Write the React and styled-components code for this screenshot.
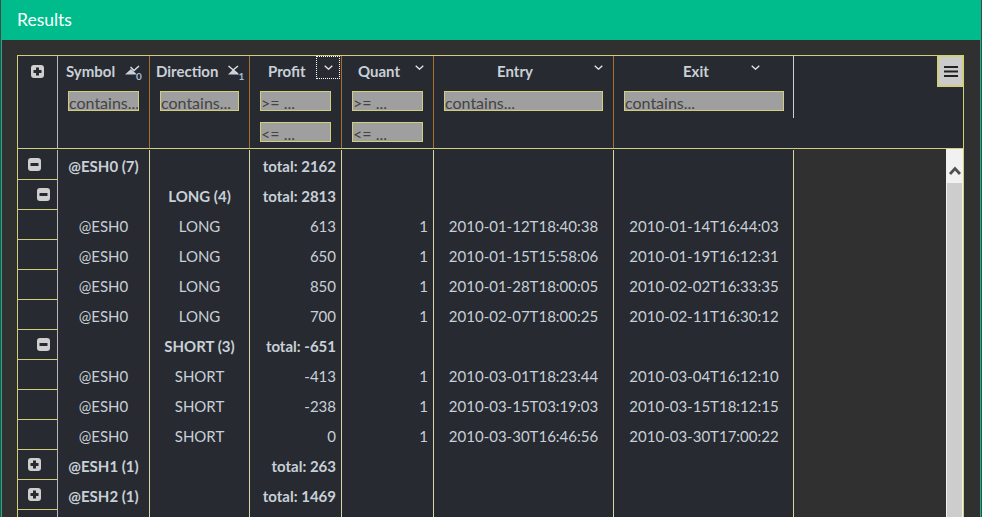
import React from 'react';
import styled, { createGlobalStyle } from 'styled-components';

const GlobalStyle = createGlobalStyle`
  html, body { margin: 0; padding: 0; height: 100%; overflow: hidden; background: #303030; }
  * { box-sizing: border-box; }
  body { font-family: Lato, "Open Sans", sans-serif; }
`;

const YELLOW = '#d2cf7c';
const BODY_LINE = '#d5d5a8';
const ORANGE = '#a8702c';
const CELL_BG = '#272a30';

const Panel = styled.div`
  width: 982px;
  height: 517px;
  overflow: hidden;
  background: #303030;
  border-left: 1px solid #484848;
  border-right: 1px solid #484848;
  box-shadow: inset 1px 0 0 #00bc8c, inset -1px 0 0 #00bc8c;
  padding: 0 1px;
  display: flex;
  flex-direction: column;
`;

const TitleBar = styled.div`
  height: 40px;
  flex: none;
  background: #00bc8c;
  color: #fff;
  font-size: 17.5px;
  line-height: 40px;
  padding-left: 15px;
`;

const PanelBody = styled.div`
  flex: 1;
  min-height: 0;
  padding: 15px 15px 0;
`;

const Grid = styled.div`
  position: relative;
  width: 947px;
  height: 480px;
  border: 1px solid ${YELLOW};
  border-bottom: none;
  display: flex;
  flex-direction: column;
  background: ${CELL_BG};
`;

const HeaderRow = styled.div`
  display: flex;
  height: 93px;
  flex: none;
  border-bottom: 1px solid ${YELLOW};
`;

const SelectHead = styled.div`
  width: 40px;
  flex: none;
  border-right: 1px solid #b8b8b8;
  display: flex;
  justify-content: center;
  padding: 9px 1px 0 0;
`;

const HeadCell = styled.div`
  width: ${p => p.$w}px;
  flex: none;
  position: relative;
  border-right: 1px solid ${p => (p.$last ? '#cfcfcf' : ORANGE)};
  height: ${p => (p.$last ? 62 : 92)}px;
  padding: 35px ${p => (p.$last ? 9 : 10)}px 0 10px;
  display: flex;
  flex-direction: column;
  gap: 11px;
`;

const HeadLabel = styled.div`
  position: absolute;
  top: 5px;
  left: ${p => p.$left}px;
  color: #c8d0d8;
  font-weight: 700;
  font-size: 15px;
  line-height: 20px;
  white-space: nowrap;
`;

const SortMark = styled.span`
  position: absolute;
  left: ${p => p.$left}px;
  top: 8px;
  display: block;
  line-height: 0;
`;

const MenuChevron = styled.span`
  position: absolute;
  top: 0;
  left: ${p => p.$left}px;
  width: 24px;
  height: 23px;
  display: flex;
  align-items: center;
  justify-content: center;
  outline: ${p => (p.$focus ? '1px dotted #fff' : 'none')};
  outline-offset: -1px;
`;

const Filter = styled.input`
  display: block;
  width: 100%;
  height: 20px;
  margin: 0;
  padding: 3px 0 0;
  background: #9f9f9f;
  border: 1px solid ${YELLOW};
  border-radius: 0;
  font-family: inherit;
  font-size: 16px;
  color: #444;
  &::placeholder { color: #444; opacity: 1; }
`;

const MenuButton = styled.button`
  position: absolute;
  top: -1px;
  right: -1px;
  width: 27px;
  height: 32px;
  background: #cbcbcb;
  border: 2px solid ${YELLOW};
  padding: 0;
  display: flex;
  align-items: center;
  justify-content: center;
`;

const BodyArea = styled.div`
  flex: 1;
  min-height: 0;
  display: flex;
  background: #303030;
`;

const Rows = styled.div`
  width: 776px;
  flex: none;
  background: ${CELL_BG};
  padding-top: 1px;
  display: flex;
  flex-direction: column;
`;

const Row = styled.div`
  display: flex;
  height: 30px;
  flex: none;
`;

const SelectCell = styled.div`
  width: 40px;
  flex: none;
  border-right: 1px solid #b8b8b8;
  border-bottom: 1px solid ${YELLOW};
  display: flex;
  align-items: center;
  padding-left: ${p => (p.$indent ? 19 : 10)}px;
`;

const Cell = styled.div`
  width: ${p => p.$w}px;
  flex: none;
  border-right: 1px solid ${BODY_LINE};
  color: #c8d0d8;
  font-size: 15px;
  font-weight: ${p => (p.$bold ? 700 : 400)};
  text-align: ${p => p.$align || 'center'};
  line-height: 32px;
  padding: ${p => (p.$nudge ? '0 5px 0 6px' : '0 5px')};
  white-space: nowrap;
`;

const Spacer = styled.div`
  flex: 1;
`;

const Scrollbar = styled.div`
  width: 17px;
  flex: none;
  background: #f1f1f1;
  display: flex;
  flex-direction: column;
  align-items: center;
`;

const ScrollArrow = styled.div`
  height: 34px;
  flex: none;
  display: flex;
  align-items: flex-end;
  padding-bottom: 8px;
  line-height: 0;
`;

const ScrollThumb = styled.div`
  width: 15px;
  flex: 1;
  background: #cdcdcd;
`;

function Toggle({ open }) {
  return (
    <svg width="13" height="13" viewBox="0 0 13 13">
      <rect x="0" y="0" width="13" height="13" rx="3" fill="#cfcfcf" />
      <rect x="2.5" y="5" width="8" height="3" fill="#272a30" />
      {!open && <rect x="5" y="2.5" width="3" height="8" fill="#272a30" />}
    </svg>
  );
}

function Chevron() {
  return (
    <svg width="9" height="5" viewBox="0 0 9 5">
      <path d="M0.7 0.7 L4.5 4.2 L8.3 0.7" fill="none" stroke="#e8e8e8" strokeWidth="1.3" />
    </svg>
  );
}

function SortAsc() {
  return (
    <svg width="18" height="18" viewBox="0 0 18 18">
      <path d="M1 10.5 L7 5 L13 10.5 Z" fill="#c8d0d8" />
      <path d="M6.5 3 L10 6.5 L15 2" fill="none" stroke="#d8dde2" strokeWidth="1.5" />
      <text x="12" y="16" fontSize="10" fontWeight="700" fontFamily="Lato, sans-serif" fill="#a8c0d8">0</text>
    </svg>
  );
}

function SortDesc() {
  return (
    <svg width="18" height="18" viewBox="0 0 18 18">
      <path d="M1 10.5 L6 5.5 L12 10.5 Z" fill="#c8d0d8" />
      <path d="M1.5 2 L11 10" fill="none" stroke="#d8dde2" strokeWidth="1.5" />
      <path d="M11 2 L5.5 6.5" fill="none" stroke="#d8dde2" strokeWidth="1.5" />
      <text x="11.5" y="16" fontSize="10" fontWeight="700" fontFamily="Lato, sans-serif" fill="#a8c0d8">1</text>
    </svg>
  );
}

const widths = [92, 100, 92, 92, 180, 180];

const data = [
  { t: 'g1', open: true, sym: '@ESH0 (7)', profit: 'total: 2162' },
  { t: 'g2', open: true, dir: 'LONG (4)', profit: 'total: 2813' },
  { sym: '@ESH0', dir: 'LONG', profit: '613', q: '1', en: '2010-01-12T18:40:38', ex: '2010-01-14T16:44:03' },
  { sym: '@ESH0', dir: 'LONG', profit: '650', q: '1', en: '2010-01-15T15:58:06', ex: '2010-01-19T16:12:31' },
  { sym: '@ESH0', dir: 'LONG', profit: '850', q: '1', en: '2010-01-28T18:00:05', ex: '2010-02-02T16:33:35' },
  { sym: '@ESH0', dir: 'LONG', profit: '700', q: '1', en: '2010-02-07T18:00:25', ex: '2010-02-11T16:30:12' },
  { t: 'g2', open: true, dir: 'SHORT (3)', profit: 'total: -651' },
  { sym: '@ESH0', dir: 'SHORT', profit: '-413', q: '1', en: '2010-03-01T18:23:44', ex: '2010-03-04T16:12:10' },
  { sym: '@ESH0', dir: 'SHORT', profit: '-238', q: '1', en: '2010-03-15T03:19:03', ex: '2010-03-15T18:12:15' },
  { sym: '@ESH0', dir: 'SHORT', profit: '0', q: '1', en: '2010-03-30T16:46:56', ex: '2010-03-30T17:00:22' },
  { t: 'g1', open: false, sym: '@ESH1 (1)', profit: 'total: 263' },
  { t: 'g1', open: false, sym: '@ESH2 (1)', profit: 'total: 1469' },
  { t: 'g3' },
];

export default function App() {
  return (
    <>
      <GlobalStyle />
      <Panel>
        <TitleBar>Results</TitleBar>
        <PanelBody>
          <Grid>
            <HeaderRow>
              <SelectHead><Toggle open={false} /></SelectHead>
              <HeadCell $w={92}>
                <HeadLabel $left={8}>Symbol</HeadLabel>
                <SortMark $left={66}><SortAsc /></SortMark>
                <Filter placeholder="contains..." />
              </HeadCell>
              <HeadCell $w={100}>
                <HeadLabel $left={6}>Direction</HeadLabel>
                <SortMark $left={77}><SortDesc /></SortMark>
                <Filter placeholder="contains..." />
              </HeadCell>
              <HeadCell $w={92}>
                <HeadLabel $left={18}>Profit</HeadLabel>
                <MenuChevron $left={66} $focus><Chevron /></MenuChevron>
                <Filter placeholder=">= ..." />
                <Filter placeholder="<= ..." />
              </HeadCell>
              <HeadCell $w={92}>
                <HeadLabel $left={16}>Quant</HeadLabel>
                <MenuChevron $left={65}><Chevron /></MenuChevron>
                <Filter placeholder=">= ..." />
                <Filter placeholder="<= ..." />
              </HeadCell>
              <HeadCell $w={180}>
                <HeadLabel $left={63}>Entry</HeadLabel>
                <MenuChevron $left={152}><Chevron /></MenuChevron>
                <Filter placeholder="contains..." />
              </HeadCell>
              <HeadCell $w={180} $last>
                <HeadLabel $left={69}>Exit</HeadLabel>
                <MenuChevron $left={129}><Chevron /></MenuChevron>
                <Filter placeholder="contains..." />
              </HeadCell>
            </HeaderRow>
            <MenuButton>
              <svg width="14" height="11" viewBox="0 0 14 11">
                <rect x="0" y="0" width="14" height="2" fill="#222" />
                <rect x="0" y="4.5" width="14" height="2" fill="#222" />
                <rect x="0" y="9" width="14" height="2" fill="#222" />
              </svg>
            </MenuButton>
            <BodyArea>
              <Rows>
                {data.map((r, i) => {
                  const bold = !!r.t;
                  return (
                    <Row key={i}>
                      <SelectCell $indent={r.t === 'g2'}>
                        {r.t && r.t !== 'g3' && <Toggle open={r.open} />}
                      </SelectCell>
                      <Cell $w={widths[0]} $bold={bold}>{r.sym}</Cell>
                      <Cell $w={widths[1]} $bold={bold}>{r.dir}</Cell>
                      <Cell $w={widths[2]} $bold={bold} $align="right">{r.profit}</Cell>
                      <Cell $w={widths[3]} $align="right">{r.q}</Cell>
                      <Cell $w={widths[4]}>{r.en}</Cell>
                      <Cell $w={widths[5]} $nudge>{r.ex}</Cell>
                    </Row>
                  );
                })}
              </Rows>
              <Spacer />
              <Scrollbar>
                <ScrollArrow>
                  <svg width="12" height="9" viewBox="0 0 12 9">
                    <path d="M1 8 L6 2.5 L11 8" fill="none" stroke="#505050" strokeWidth="2.8" />
                  </svg>
                </ScrollArrow>
                <ScrollThumb />
              </Scrollbar>
            </BodyArea>
          </Grid>
        </PanelBody>
      </Panel>
    </>
  );
}
